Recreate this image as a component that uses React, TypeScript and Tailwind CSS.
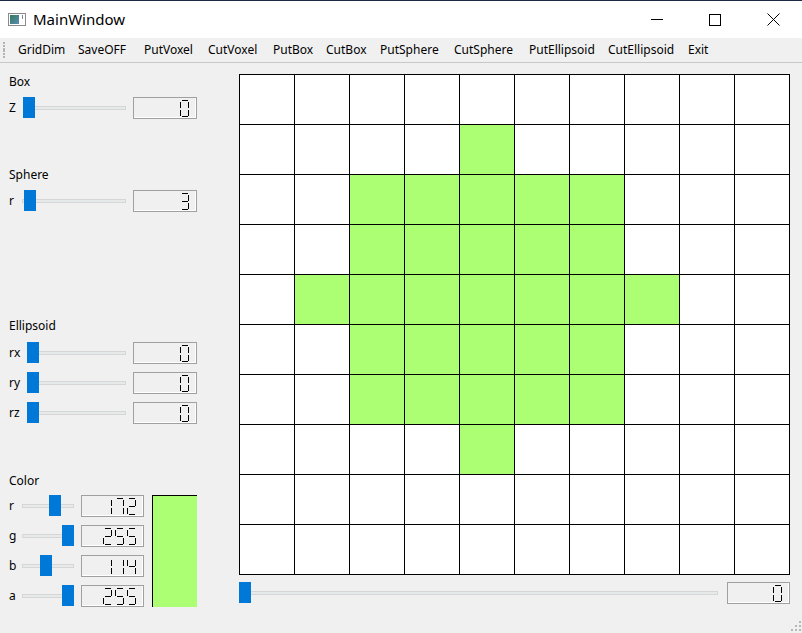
import React from "react";

const SEGMENTS: Record<string, string> = {
  "0": "abcdef",
  "1": "bc",
  "2": "abged",
  "3": "abgcd",
  "4": "fgbc",
  "5": "afgcd",
  "6": "afgedc",
  "7": "abc",
  "8": "abcdefg",
  "9": "abcdfg",
};

const SEG_LINES: Record<string, [number, number, number, number]> = {
  a: [1.5, 0.5, 7.5, 0.5],
  b: [8.5, 1.5, 8.5, 7.5],
  c: [8.5, 9.5, 8.5, 15.5],
  d: [1.5, 16.5, 7.5, 16.5],
  e: [0.5, 9.5, 0.5, 15.5],
  f: [0.5, 1.5, 0.5, 7.5],
  g: [1.5, 8.5, 7.5, 8.5],
};

function Digit({ d }: { d: string }) {
  const segs = SEGMENTS[d] || "";
  return (
    <svg width="9" height="17" viewBox="0 0 9 17" shapeRendering="crispEdges" aria-hidden="true">
      {segs.split("").map((s) => {
        const [x1, y1, x2, y2] = SEG_LINES[s];
        return <line key={s} x1={x1} y1={y1} x2={x2} y2={y2} stroke="#000" strokeWidth="1" />;
      })}
    </svg>
  );
}

// QLCDNumber look-alike: segments drawn, value kept as the accessible label
function Lcd({ value, wide = true }: { value: number; wide?: boolean }) {
  const text = String(value);
  return (
    <div
      role="img"
      aria-label={text}
      title={text}
      className={`${wide ? "w-[64px]" : "w-[63px]"} h-[22px] border border-[#a0a0a0] bg-[#f0f0f0] shadow-[inset_-1px_-1px_0_#ffffff] flex items-center justify-end gap-[3px] pr-[7px]`}
    >
      {text.split("").map((c, i) => (
        <Digit key={i} d={c} />
      ))}
    </div>
  );
}

function Slider({ width, offset }: { width: number; offset: number }) {
  return (
    <div className="relative h-[21px] flex items-center" style={{ width }}>
      <div className="h-[4px] w-full border border-[#d6d6d6] bg-[#e7eaea]" />
      <div className="absolute top-0 h-[21px] w-[12px] bg-[#0078d7]" style={{ left: offset }} />
    </div>
  );
}

function Row({
  label,
  labelW,
  sliderW,
  offset,
  value,
}: {
  label: string;
  labelW: string;
  sliderW: number;
  offset: number;
  value: number;
}) {
  return (
    <div className="flex items-start h-[22px]">
      <span className={`${labelW} h-[22px] leading-[22px]`}>{label}</span>
      <Slider width={sliderW} offset={offset} />
      <div className="ml-[7px]">
        <Lcd value={value} />
      </div>
    </div>
  );
}

const GREEN: Record<number, number[]> = {
  1: [4],
  2: [2, 3, 4, 5, 6],
  3: [2, 3, 4, 5, 6],
  4: [1, 2, 3, 4, 5, 6, 7],
  5: [2, 3, 4, 5, 6],
  6: [2, 3, 4, 5, 6],
  7: [4],
};

const MENU = [
  ["GridDim", "w-[60px]"],
  ["SaveOFF", "w-[66px]"],
  ["PutVoxel", "w-[64px]"],
  ["CutVoxel", "w-[65px]"],
  ["PutBox", "w-[53px]"],
  ["CutBox", "w-[54px]"],
  ["PutSphere", "w-[74px]"],
  ["CutSphere", "w-[75px]"],
  ["PutEllipsoid", "w-[79px]"],
  ["CutEllipsoid", "w-[80px]"],
  ["Exit", "w-[40px]"],
];

export default function App() {
  const colors = [
    { l: "r", v: 172 },
    { l: "g", v: 255 },
    { l: "b", v: 114 },
    { l: "a", v: 255 },
  ];

  return (
    <div className="relative w-[802px] h-[633px] overflow-hidden bg-[#f0f0f0] flex flex-col font-['Noto_Sans',sans-serif] text-[12px] text-black">
      {/* title bar */}
      <div className="h-[38px] shrink-0 bg-white border-t border-[#1e2a44] flex items-center">
        <div className="ml-[8px] w-[18px] h-[13px] border border-[#8a8a8a] bg-white flex p-[1px]">
          <div className="w-[9px] h-full bg-gradient-to-br from-[#2f7a5a] to-[#5a8ab8]" />
          <div className="flex-1 flex justify-end pr-[1px]">
            <div className="w-[1px] h-[4px] bg-[#7a8a9a]" />
          </div>
        </div>
        <span className="ml-[7px] text-[15px] text-black">MainWindow</span>
        <div className="ml-auto flex h-full">
          <div className="w-[58px] h-full flex items-center justify-center">
            <div className="w-[12px] h-[1px] bg-black" />
          </div>
          <div className="w-[58px] h-full flex items-center justify-center">
            <div className="w-[12px] h-[12px] border border-black" />
          </div>
          <div className="w-[58px] h-full flex items-center justify-center">
            <svg width="13" height="13" viewBox="0 0 13 13">
              <path d="M0.5 0.5 L12.5 12.5 M12.5 0.5 L0.5 12.5" stroke="#000" strokeWidth="1" />
            </svg>
          </div>
        </div>
      </div>

      {/* toolbar */}
      <div className="h-[25px] shrink-0 border-b border-[#c8c8c8] bg-[#f0f0f0] flex items-center">
        <div className="ml-[3px] w-[3px] h-[18px] flex flex-col justify-between py-[1px]">
          {Array.from({ length: 6 }).map((_, i) => (
            <div key={i} className="w-[2px] h-[2px] bg-[#b4b4b4]" />
          ))}
        </div>
        <div className="ml-[12px] flex">
          {MENU.map(([t, w]) => (
            <span key={t} className={`${w} whitespace-nowrap`}>
              {t}
            </span>
          ))}
        </div>
      </div>

      {/* body */}
      <div className="flex flex-1">
        {/* left panel */}
        <div className="w-[239px] shrink-0 pl-[9px] flex flex-col">
          <span className="mt-[11px] h-[16px] leading-[16px]">Box</span>
          <div className="mt-[7px]">
            <Row label="Z" labelW="w-[14px]" sliderW={103} offset={0} value={0} />
          </div>

          <span className="mt-[48px] h-[16px] leading-[16px]">Sphere</span>
          <div className="mt-[7px]">
            <Row label="r" labelW="w-[13px]" sliderW={104} offset={2} value={3} />
          </div>

          <span className="mt-[106px] h-[16px] leading-[16px]">Ellipsoid</span>
          <div className="mt-[8px] flex flex-col gap-[8px]">
            <Row label="rx" labelW="w-[18px]" sliderW={99} offset={0} value={0} />
            <Row label="ry" labelW="w-[18px]" sliderW={99} offset={0} value={0} />
            <Row label="rz" labelW="w-[18px]" sliderW={99} offset={0} value={0} />
          </div>

          <span className="mt-[49px] h-[16px] leading-[16px]">Color</span>
          <div className="mt-[6px] flex items-start">
            <div className="flex flex-col gap-[8px]">
              {colors.map((c) => (
                <div key={c.l} className="flex items-start h-[22px]">
                  <span className="w-[13px] h-[22px] leading-[22px]">{c.l}</span>
                  <Slider width={52} offset={Math.round((c.v / 255) * 40)} />
                  <div className="ml-[7px]">
                    <Lcd value={c.v} wide={false} />
                  </div>
                </div>
              ))}
            </div>
            <div className="ml-[8px] w-[45px] h-[112px] bg-[#acff72] border-l border-t border-black" />
          </div>
        </div>

        {/* right panel */}
        <div className="flex flex-col mt-[11px]">
          <div className="border-l border-t border-black bg-white flex flex-col w-[551px]">
            {Array.from({ length: 10 }).map((_, r) => (
              <div key={r} className="flex">
                {Array.from({ length: 10 }).map((_, c) => (
                  <div
                    key={c}
                    className={`w-[55px] h-[50px] border-r border-b border-black ${
                      GREEN[r]?.includes(c) ? "bg-[#acff72]" : "bg-white"
                    }`}
                  />
                ))}
              </div>
            ))}
          </div>
          <div className="mt-[7px] flex items-start">
            <Slider width={479} offset={0} />
            <div className="ml-[9px]">
              <Lcd value={0} wide={false} />
            </div>
          </div>
        </div>
      </div>

      {/* size grip */}
      <div className="absolute right-[1px] bottom-[1px] w-[11px] h-[11px]">
        <div className="absolute right-0 top-0 w-[2px] h-[2px] bg-[#b8b8b8]" />
        <div className="absolute right-0 top-[4px] w-[2px] h-[2px] bg-[#b8b8b8]" />
        <div className="absolute right-[4px] top-[4px] w-[2px] h-[2px] bg-[#b8b8b8]" />
        <div className="absolute right-0 top-[8px] w-[2px] h-[2px] bg-[#b8b8b8]" />
        <div className="absolute right-[4px] top-[8px] w-[2px] h-[2px] bg-[#b8b8b8]" />
        <div className="absolute right-[8px] top-[8px] w-[2px] h-[2px] bg-[#b8b8b8]" />
      </div>
    </div>
  );
}
